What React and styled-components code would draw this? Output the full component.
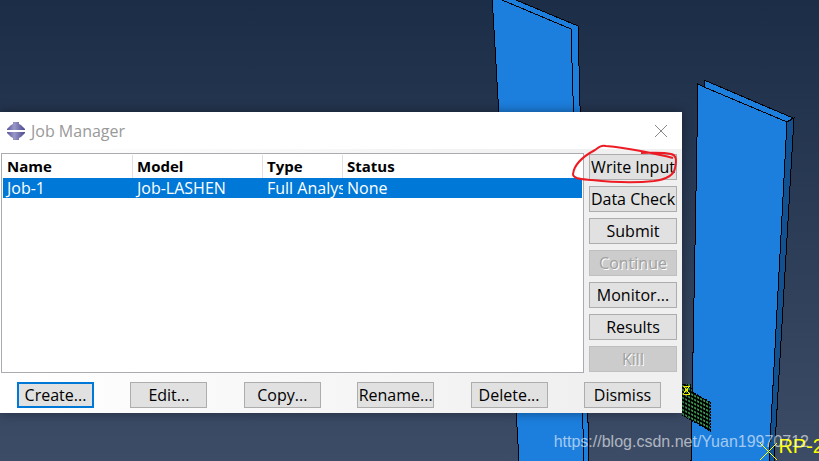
import React, { useState } from "react";
import styled, { createGlobalStyle, css } from "styled-components";

const jobs = [
  { name: "Job-1", model: "Job-LASHEN", type: "Full Analysis", status: "None" },
];

const sideActions = [
  { label: "Write Input", marked: true },
  { label: "Data Check" },
  { label: "Submit" },
  { label: "Continue", disabled: true },
  { label: "Monitor..." },
  { label: "Results" },
  { label: "Kill", disabled: true },
];

const bottomActions = ["Create...", "Edit...", "Copy...", "Rename...", "Delete...", "Dismiss"];

const Viewport = () => (
  <Scene viewBox="0 0 819 461" preserveAspectRatio="xMaxYMin slice" aria-hidden="true">
    <defs>
      <pattern id="mesh" width="3" height="4" patternUnits="userSpaceOnUse" patternTransform="skewY(27)">
        <rect width="3" height="4" fill="#000" />
        <rect x="1" y="1" width="2" height="2" fill="#3f9a55" />
      </pattern>
    </defs>
    <g stroke="#000" strokeWidth="1" shapeRendering="crispEdges">
      <path d="M492 -5 L516 0 L578 26 L589 461 L519 461 Z" fill="#1c7edd" />
      <path d="M502 0 L571 29 L584 461" fill="none" />
      <path d="M698 84 L704 87 L704 80 L793 118 L787 122 L769 461 L691 461 Z" fill="#1c7edd" />
      <path d="M787 122 L794 118 L774 461 L769 461 Z" fill="#12508f" />
      <path d="M704 87 L787 122" fill="none" />
      <path d="M682 384 L691 384 L692 392 L710 402 L710 431 L682 414 Z" fill="url(#mesh)" stroke="none" />
      <path d="M692 392 L710 402 L710 431 L682 415" fill="none" strokeDasharray="2 1" />
    </g>
    <g stroke="#ff0" fill="none" shapeRendering="crispEdges">
      <path d="M683 386 L690 394 M690 386 L683 394 M683 386 H690 M683 394 H690" />
      <path d="M760 443 L777 460 M777 443 L760 460" />
    </g>
  </Scene>
);

const JobIcon = () => (
  <svg width="18" height="18" viewBox="0 0 18 18" aria-hidden="true">
    <defs>
      <linearGradient id="jobIcon" x1="0" x2="1" y1="0" y2="0">
        <stop offset="0" stopColor="#5a569c" />
        <stop offset="0.4" stopColor="#9a98c8" />
        <stop offset="1" stopColor="#4b4790" />
      </linearGradient>
    </defs>
    <path
      d="M6 0 H12 V2 L14 3 L18 7 V8 H0 V7 L4 3 L6 2 Z M0 10 H18 V11 L14 15 L12 16 V18 H6 V16 L4 15 L0 11 Z"
      fill="url(#jobIcon)"
    />
  </svg>
);

const App = () => {
  const [selected, setSelected] = useState("Job-1");

  return (
    <Page>
      <GlobalStyle />
      <Viewport />
      <PointLabel>RP-2</PointLabel>

      <Dialog role="dialog" aria-labelledby="job-manager-title">
        <TitleBar>
          <JobIcon />
          <Title id="job-manager-title">Job Manager</Title>
          <CloseButton type="button" aria-label="Close">
            <svg width="14" height="14" viewBox="0 0 14 14">
              <path d="M1 1 L13 13 M13 1 L1 13" stroke="#888" fill="none" />
            </svg>
          </CloseButton>
        </TitleBar>

        <Content>
          <ListBox>
            <JobTable>
              <colgroup>
                <Column $width={130} />
                <Column $width={130} />
                <Column $width={80} />
                <col />
              </colgroup>
              <thead>
                <tr>
                  <HeadCell scope="col">Name</HeadCell>
                  <HeadCell scope="col">Model</HeadCell>
                  <HeadCell scope="col">Type</HeadCell>
                  <HeadCell scope="col">Status</HeadCell>
                </tr>
              </thead>
              <tbody>
                {jobs.map((job) => (
                  <JobRow
                    key={job.name}
                    $selected={selected === job.name}
                    onClick={() => setSelected(job.name)}
                  >
                    <Cell>{job.name}</Cell>
                    <Cell>{job.model}</Cell>
                    <Cell>{job.type}</Cell>
                    <Cell>{job.status}</Cell>
                  </JobRow>
                ))}
              </tbody>
            </JobTable>
          </ListBox>

          <SideActions>
            {sideActions.map((action) => (
              <ActionSlot key={action.label}>
                <SideButton type="button" disabled={action.disabled}>
                  {action.label}
                </SideButton>
                {action.marked && (
                  <Marker viewBox="0 0 110 40" aria-hidden="true">
                    <path d="M103 13 C88 9 58 3 36 1 C31 0 29 2 25 5 C12 12 4 20 3 29 C3 34 12 34 22 35 C40 37 66 38 84 36 C98 34 104 30 105 23 C107 14 106 10 101 9 C92 7 82 8 71 8" />
                  </Marker>
                )}
              </ActionSlot>
            ))}
          </SideActions>
        </Content>

        <BottomActions>
          {bottomActions.map((label, i) => (
            <BottomButton key={label} type="button" $primary={i === 0}>
              {label}
            </BottomButton>
          ))}
        </BottomActions>
      </Dialog>

      <Watermark>https://blog.csdn.net/Yuan19970712</Watermark>
    </Page>
  );
};

export default App;

const GlobalStyle = createGlobalStyle`
* {
  box-sizing: border-box;
}
body {
  margin: 0;
  font-family: "Open Sans", "Noto Sans", sans-serif;
  font-size: 16px;
  line-height: 20px;
  color: #000;
}
`;

const Page = styled.main`
  position: relative;
  min-height: 100vh;
  padding: 112px 137px 48px 0;
  overflow: hidden;
  background: linear-gradient(#1c2d47, #3c4c66);
`;

const Scene = styled.svg`
  position: absolute;
  top: 0;
  right: 0;
  width: 100%;
  height: 100%;
`;

const Dialog = styled.section`
  position: relative;
  background: linear-gradient(90deg, #fff, #f0f0f0 85%);
  box-shadow: 0 0 10px rgba(0, 0, 0, 0.4);
`;

const TitleBar = styled.header`
  display: flex;
  align-items: center;
  gap: 6px;
  height: 37px;
  padding: 0 14px 0 7px;
  background: #fff;
`;

const Title = styled.h1`
  flex: 1;
  margin: 0;
  font-size: 16px;
  font-weight: 400;
  color: #999;
`;

const CloseButton = styled.button`
  display: flex;
  padding: 0;
  border: 0;
  background: none;
`;

const Content = styled.div`
  display: flex;
  gap: 5px;
  padding: 4px 5px 0 1px;
`;

const ListBox = styled.div`
  flex: 1;
  min-height: 220px;
  padding: 1px;
  border: 1px solid #a9abb0;
  background: #fff;
`;

const JobTable = styled.table`
  width: 100%;
  table-layout: fixed;
  border-collapse: separate;
  border-spacing: 0;
`;

const Column = styled.col`
  width: ${(props) => props.$width}px;
`;

const cellText = css`
  padding: 0 0 0 4px;
  text-align: left;
  white-space: nowrap;
  overflow: hidden;
`;

const HeadCell = styled.th`
  ${cellText}
  height: 23px;
  padding-bottom: 2px;
  font-size: 15px;
  font-weight: 700;
  border-right: 1px solid #e0e0e0;

  &:last-child {
    border-right: 0;
  }
`;

const JobRow = styled.tr`
  color: ${(props) => (props.$selected ? "#fff" : "#000")};
  background: ${(props) => (props.$selected ? "#0078d7" : "#fff")};
`;

const Cell = styled.td`
  ${cellText}
  height: 20px;
`;

const SideActions = styled.div`
  display: flex;
  flex-direction: column;
  gap: 6px;
  width: 88px;
  padding-top: 1px;
`;

const ActionSlot = styled.div`
  position: relative;
  display: flex;
`;

const Button = styled.button`
  height: 26px;
  padding: 0;
  border: 1px solid #adadad;
  background: #e1e1e1;
  font: inherit;
  color: #000;
  white-space: nowrap;

  &:disabled {
    border-color: #bfbfbf;
    background: #ccc;
    color: #a0a0a0;
    text-shadow: 1px 1px 0 #fff;
  }
`;

const SideButton = styled(Button)`
  width: 100%;
`;

const BottomActions = styled.footer`
  display: flex;
  justify-content: space-between;
  padding: 9px 21px 5px 17px;
`;

const BottomButton = styled(Button)`
  width: 77px;
  border: ${(props) => (props.$primary ? "2px solid #0078d7" : "1px solid #adadad")};
`;

const Marker = styled.svg`
  position: absolute;
  top: -9px;
  left: -19px;
  width: 110px;
  height: 40px;
  overflow: visible;
  pointer-events: none;
  fill: none;
  stroke: #ed1c24;
  stroke-width: 2px;
`;

const PointLabel = styled.span`
  position: absolute;
  right: -5px;
  bottom: 5px;
  font-family: "Liberation Sans", sans-serif;
  font-size: 20px;
  color: #ff0;
`;

const Watermark = styled.span`
  position: absolute;
  right: 10px;
  bottom: 9px;
  font-family: "Liberation Sans", sans-serif;
  font-size: 16px;
  color: rgba(255, 255, 255, 0.6);
`;
